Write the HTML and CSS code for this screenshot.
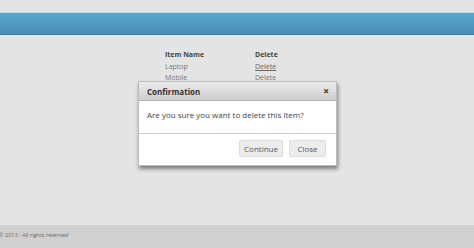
FILE: index.html
```html
<!DOCTYPE html>
<html lang="en">
<head>
    <meta charset="UTF-8">
    <title>Items</title>
    <link rel="stylesheet" href="styles.css">
</head>
<body>
    <div class="page">
        <div class="banner"></div>

        <div class="content">
            <div class="items">
                <span class="head">Item Name</span>
                <span class="head">Delete</span>
                <span>Laptop</span>
                <a href="#" class="del">Delete</a>
                <span>Mobile</span>
                <span>Delete</span>
            </div>
        </div>

        <div class="footer">&copy; 2013 - All rights reserved</div>
    </div>

    <!-- confirmation dialog -->
    <div class="dialog">
        <div class="dialog-title">
            <span>Confirmation</span>
            <span class="close-x">&times;</span>
        </div>
        <div class="dialog-body">Are you sure you want to delete this Item?</div>
        <div class="dialog-buttons">
            <button>Continue</button>
            <button>Close</button>
        </div>
    </div>
</body>
</html>
```

FILE: styles.css
```css
body {
    margin: 0;
    font-family: "Open Sans", Arial, sans-serif;
    background-color: #e5e4e4;
}
.page {
    height: 248px;
    display: flex;
    flex-direction: column;
    padding-top: 12px;
    box-sizing: border-box;
}
.banner {
    height: 23px;
    border-top: 1px solid #b6def0;
    border-bottom: 1px solid #42789a;
    box-sizing: border-box;
    background: linear-gradient(#58a7d1, #4a8cb3);
}
.content {
    flex: 1;
    padding-top: 14px;
    padding-left: 165px;
}
.items {
    display: grid;
    grid-template-columns: 90px auto;
    font-size: 7px;
    line-height: 11px;
    color: #777;
    width: 120px;
}
.items .head {
    font-weight: bold;
    color: #444;
    margin-bottom: 1px;
}
.items .del {
    color: #666;
}
.footer {
    height: 23px;
    background-color: #d0d0d0;
    color: #666;
    font-size: 5.5px;
    line-height: 20px;
    text-indent: -1px;
}
.dialog {
    position: absolute;
    left: 138px;
    top: 81px;
    width: 199px;
    background: #fff;
    border: 1px solid #bbb;
    box-sizing: border-box;
    box-shadow: 1px 3px 4px rgba(0, 0, 0, 0.45);
}
.dialog-title {
    height: 18px;
    display: flex;
    align-items: center;
    justify-content: space-between;
    padding: 0 7px 0 8px;
    background: linear-gradient(#ececec, #cdcdcd);
    border-bottom: 1px solid #b5b5b5;
    font-size: 8px;
    font-weight: bold;
    color: #333;
}
.close-x {
    font-size: 10px;
    color: #333;
}
.dialog-body {
    height: 33px;
    padding: 8px 8px 0;
    box-sizing: border-box;
    font-size: 8px;
    line-height: 12px;
    color: #444;
    border-bottom: 1px solid #ccc;
}
.dialog-buttons {
    display: flex;
    justify-content: flex-end;
    gap: 6px;
    padding: 6px 10px 8px;
}
.dialog-buttons button {
    height: 17px;
    min-width: 37px;
    padding: 0 4px;
    font-family: "Open Sans", Arial, sans-serif;
    font-size: 8px;
    color: #555;
    background: #ececec;
    border: 1px solid #dcdcdc;
    border-radius: 2px;
}
```
